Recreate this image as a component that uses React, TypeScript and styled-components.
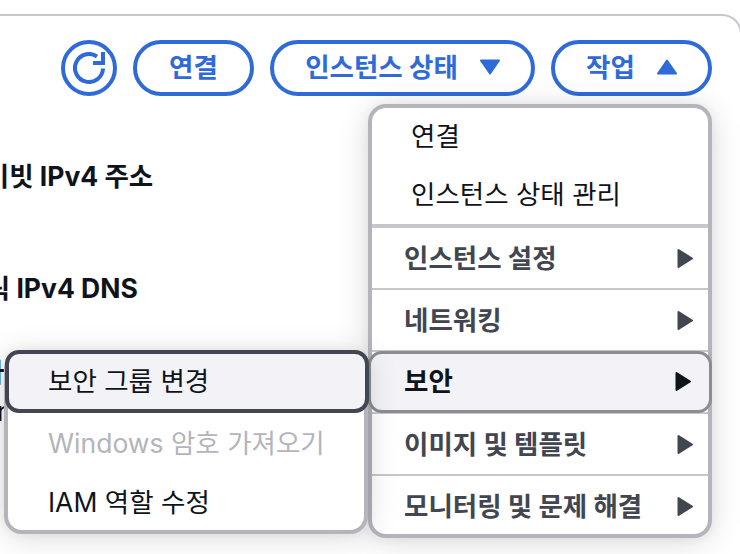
import React from "react";
import styled, { createGlobalStyle } from "styled-components";

const FONT = `Inter, "Noto Sans CJK KR", "Noto Sans", sans-serif`;

const Global = createGlobalStyle`
  html, body { margin: 0; padding: 0; background: #fff; overflow: hidden; }
  body { width: 740px; height: 554px; font-family: ${FONT}; }
  * { box-sizing: border-box; }
`;

const Stage = styled.div`
  position: relative;
  width: 740px;
  height: 554px;
  overflow: hidden;
  padding-top: 14px;
`;

const Panel = styled.div`
  width: 782px;
  margin-left: -40px;
  height: 600px;
  border: 2px solid #c6c6cd;
  border-bottom: none;
  border-radius: 0 20px 0 0;
`;

const Toolbar = styled.div`
  display: flex;
  justify-content: flex-end;
  align-items: center;
  gap: 16px;
  padding: 24px 30px 0 0;
  width: 780px;
`;

const RefreshButton = styled.button`
  width: 56px;
  height: 56px;
  padding: 0;
  border: 4px solid #2f6bd8;
  border-radius: 50%;
  background: #fff;
  display: flex;
  align-items: center;
  justify-content: center;
`;

const PillButton = styled.button<{ $w: number }>`
  width: ${(p) => p.$w}px;
  height: 56px;
  padding: 0 0 2px;
  border: 4px solid #2f6bd8;
  border-radius: 28px;
  background: #fff;
  color: #2f6bd8;
  font: 700 26.5px/1 ${FONT};
  display: flex;
  align-items: center;
  justify-content: center;
  gap: 22px;
`;

const Fields = styled.div`
  margin-left: 40px;
  display: flex;
  flex-direction: column;
`;

const FieldLabel = styled.div<{ $shift: number; $top: number }>`
  margin-top: ${(p) => p.$top}px;
  margin-left: ${(p) => p.$shift}px;
  white-space: nowrap;
  color: #0f141a;
  font: 700 26.5px/36px ${FONT};
`;

const FieldValue = styled.div`
  margin-top: 6px;
  margin-left: -5px;
  color: #0f141a;
  font: 400 26.5px/30px ${FONT};
`;

const Menu = styled.div`
  position: absolute;
  left: 368px;
  top: 104px;
  width: 344px;
  height: 434px;
  background: #fff;
  border: 4px solid #b4b4bb;
  border-radius: 18px;
  box-shadow: 0 4px 32px rgba(0, 7, 22, 0.14), 0 0 12px rgba(0, 7, 22, 0.06);
`;

const SubMenu = styled.div`
  position: absolute;
  left: 4px;
  top: 350px;
  width: 364px;
  height: 184px;
  background: #fff;
  border: 4px solid #b4b4bb;
  border-radius: 18px;
  box-shadow: 0 4px 32px rgba(0, 7, 22, 0.14), 0 0 12px rgba(0, 7, 22, 0.06);
`;

const PlainItem = styled.div<{ $h: number }>`
  height: ${(p) => p.$h}px;
  display: flex;
  align-items: center;
  padding-left: 39px;
  color: #0f141a;
  font: 400 26.5px/1 ${FONT};
`;

const Divider = styled.div<{ $t: number }>`
  height: ${(p) => p.$t}px;
  background: #c6c6cd;
`;

const GroupItem = styled.div<{ $h: number }>`
  height: ${(p) => p.$h}px;
  display: flex;
  align-items: center;
  justify-content: space-between;
  padding: 0 15px 0 32px;
  color: #424650;
  font: 700 26.5px/1 ${FONT};
`;

const ActiveGroup = styled.div`
  position: absolute;
  left: -4px;
  top: 243px;
  width: 344px;
  height: 62px;
  display: flex;
  align-items: center;
  justify-content: space-between;
  padding: 0 18px 2px 33px;
  background: #f3f3f7;
  border: 3px solid #8c8c94;
  border-radius: 14px;
  color: #0f141a;
  font: 700 26.5px/1 ${FONT};
`;

const ActiveSub = styled.div`
  position: absolute;
  left: -3px;
  top: -4px;
  width: 364px;
  height: 63px;
  display: flex;
  align-items: center;
  padding-left: 39px;
  background: #f3f3f7;
  border: 4px solid #424650;
  border-radius: 14px;
  color: #0f141a;
  font: 400 26.5px/1 ${FONT};
`;

const SubItem = styled.div<{ $off?: boolean; $h: number }>`
  height: ${(p) => p.$h}px;
  display: flex;
  align-items: center;
  padding-left: 40px;
  color: ${(p) => (p.$off ? "#b4b4bb" : "#0f141a")};
  font: 400 26.5px/1 ${FONT};
`;

const SubSpacer = styled.div`
  height: 59px;
`;

const Caret = ({ dir, color }: { dir: "up" | "down" | "right"; color: string }) => {
  const pts = dir === "up" ? "10,1.5 19,14.5 1,14.5" : dir === "down" ? "1,1.5 19,1.5 10,14.5" : "1.5,1 15,9.5 1.5,18";
  const size = dir === "right" ? { w: 16, h: 19 } : { w: 20, h: 16 };
  return (
    <svg width={size.w} height={size.h} viewBox={`0 0 ${size.w} ${size.h}`} style={{ flex: "none" }}>
      <polygon points={pts} fill={color} stroke={color} strokeWidth="2" strokeLinejoin="round" />
    </svg>
  );
};

const Refresh = () => (
  <svg width="32" height="32" viewBox="0 0 32 32" fill="none">
    <path d="M30 16.5A14 14 0 1 1 24 4.5" stroke="#2f6bd8" strokeWidth="4" />
    <path d="M32 0v13H20V9h8V0z" fill="#2f6bd8" />
  </svg>
);

export default function App() {
  return (
    <Stage>
      <Global />
      <Panel>
        <Toolbar>
          <RefreshButton aria-label="새로 고침"><Refresh /></RefreshButton>
          <PillButton $w={121}>연결</PillButton>
          <PillButton $w={265}>인스턴스 상태<Caret dir="down" color="#2f6bd8" /></PillButton>
          <PillButton $w={161}>작업<Caret dir="up" color="#2f6bd8" /></PillButton>
        </Toolbar>
        <Fields>
          <FieldLabel $shift={-66} $top={62}>프라이빗 IPv4 주소</FieldLabel>
          <FieldLabel $shift={-65} $top={76}>퍼블릭 IPv4 DNS</FieldLabel>
          <FieldLabel $shift={-22} $top={48}>파</FieldLabel>
          <FieldValue>r</FieldValue>
        </Fields>
      </Panel>
      <Menu>
        <PlainItem $h={57}>연결</PlainItem>
        <PlainItem $h={59}>인스턴스 상태 관리</PlainItem>
        <Divider $t={4} />
        <GroupItem $h={60}>인스턴스 설정<Caret dir="right" color="#424650" /></GroupItem>
        <Divider $t={2} />
        <GroupItem $h={60}>네트워킹<Caret dir="right" color="#424650" /></GroupItem>
        <Divider $t={2} />
        <GroupItem $h={60} />
        <Divider $t={2} />
        <GroupItem $h={60}>이미지 및 템플릿<Caret dir="right" color="#424650" /></GroupItem>
        <Divider $t={2} />
        <GroupItem $h={60}>모니터링 및 문제 해결<Caret dir="right" color="#424650" /></GroupItem>
        <ActiveGroup>보안<Caret dir="right" color="#0f141a" /></ActiveGroup>
      </Menu>
      <SubMenu>
        <ActiveSub>보안 그룹 변경</ActiveSub>
        <SubSpacer />
        <SubItem $off $h={60}>Windows 암호 가져오기</SubItem>
        <SubItem $h={58}>IAM 역할 수정</SubItem>
      </SubMenu>
    </Stage>
  );
}
